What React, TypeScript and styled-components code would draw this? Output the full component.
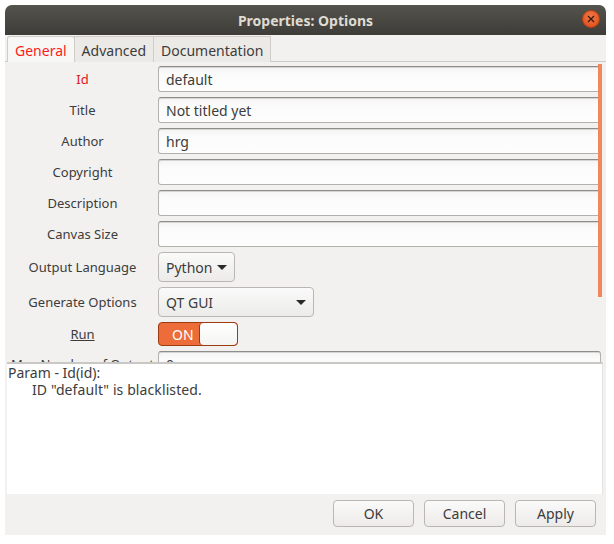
import React from "react";
import styled, { createGlobalStyle } from "styled-components";

const Global = createGlobalStyle`
  html, body { margin: 0; padding: 0; background: #ffffff; }
  body { font-family: "Noto Sans", "DejaVu Sans", sans-serif; }
  * { box-sizing: border-box; }
`;

const Window = styled.div`
  margin: 5px 0 0 5px;
  width: 601px;
  height: 530px;
  display: flex;
  flex-direction: column;
  background: #f2f1f0;
  border-radius: 7px 7px 0 0;
  overflow: hidden;
`;

const TitleBar = styled.div`
  height: 30px;
  flex: none;
  position: relative;
  display: flex;
  align-items: center;
  justify-content: center;
  background: linear-gradient(#55534d, #3d3c38);
  color: #dfdbd2;
  font-weight: 700;
  font-size: 14px;
`;

const CloseBtn = styled.div`
  position: absolute;
  right: 6px;
  top: 5px;
  width: 18px;
  height: 18px;
  border-radius: 50%;
  background: radial-gradient(circle at 50% 35%, #f07a4a, #dd4814);
  border: 1px solid #b7400f;
  display: flex;
  align-items: center;
  justify-content: center;
`;

const Tabs = styled.div`
  flex: none;
  display: flex;
  height: 27px;
  padding: 1px 0 0 2px;
  border-bottom: 1px solid #cdcbc7;
`;

const Tab = styled.div<{ $active?: boolean }>`
  height: 26px;
  padding: 2px 7px 0 7px;
  min-width: ${(p) => (p.$active ? "0" : "auto")};
  display: flex;
  align-items: center;
  font-size: 14px;
  color: ${(p) => (p.$active ? "#ff1a1a" : "#3c3c3c")};
  background: ${(p) => (p.$active ? "#f7f7f6" : "#eceae7")};
  border: 1px solid #d0cdc8;
  border-bottom: none;
  margin-right: -1px;
  border-radius: ${(p) => (p.$active ? "3px 3px 0 0" : "0")};
`;

const ScrollPane = styled.div`
  flex: none;
  height: 300px;
  position: relative;
  overflow: hidden;
  padding: 4px 5px 0 2px;
`;

const Form = styled.div`
  display: grid;
  grid-template-columns: 151px 1fr;
  row-gap: 5px;
  align-items: center;
`;

const Label = styled.div<{ $error?: boolean; $under?: boolean }>`
  text-align: center;
  font-size: 13px;
  color: ${(p) => (p.$error ? "#e0171a" : "#3c3c3c")};
  text-decoration: ${(p) => (p.$under ? "underline" : "none")};
  white-space: nowrap;
`;

const Entry = styled.div`
  height: 26px;
  border: 1px solid #b3b1ad;
  border-top-color: #8f8d89;
  border-radius: 3px;
  background: linear-gradient(#f4f4f4, #fbfbfb 30%, #fdfdfd);
  box-shadow: inset 0 1px 0 #d6d5d2;
  padding: 0 7px;
  display: flex;
  align-items: center;
  font-size: 14px;
  color: #3c3c3c;
`;

const Combo = styled.div<{ $width: number }>`
  width: ${(p) => p.$width}px;
  height: 30px;
  border: 1px solid #bab7b2;
  border-radius: 4px;
  background: linear-gradient(#fafafa, #ecebe9);
  display: flex;
  align-items: center;
  justify-content: space-between;
  padding: 0 7px;
  font-size: 14px;
  color: #3c3c3c;
`;

const Arrow = styled.span`
  width: 0;
  height: 0;
  border-left: 5px solid transparent;
  border-right: 5px solid transparent;
  border-top: 5px solid #2a2a2a;
`;

const Switch = styled.div`
  width: 80px;
  height: 24px;
  border: 1px solid #9c3a12;
  border-radius: 4px;
  background: #ed6d3a;
  display: flex;
  align-items: stretch;
  overflow: hidden;
`;

const SwitchText = styled.div`
  flex: 1;
  display: flex;
  align-items: center;
  padding-left: 13px;
  color: #ffffff;
  font-size: 14px;
`;

const Knob = styled.div`
  width: 38px;
  background: linear-gradient(#ffffff, #f4f4f3);
  border-left: 1px solid #9c3a12;
  border-radius: 4px;
`;

const ScrollThumb = styled.div`
  position: absolute;
  right: 4px;
  top: 2px;
  width: 4px;
  height: 233px;
  background: #f0885c;
`;

const MessagePane = styled.div`
  flex: none;
  height: 132px;
  margin: 0 3px 0 2px;
  background: #ffffff;
  border-top: 2px solid #c9c8c5;
  border-right: 1px solid #e4e3e1;
  font-size: 14px;
  color: #3c3c3c;
  padding: 0 0 0 1px;
  line-height: 17px;
`;

const Indented = styled.div`
  padding-left: 24px;
  letter-spacing: 0.1px;
`;

const ButtonRow = styled.div`
  flex: 1;
  display: flex;
  justify-content: flex-end;
  align-items: flex-start;
  gap: 10px;
  padding: 6px 10px 0 0;
`;

const Button = styled.div`
  width: 81px;
  height: 27px;
  border: 1px solid #bab7b2;
  border-radius: 4px;
  background: linear-gradient(#fafafa, #edebe9);
  display: flex;
  align-items: center;
  justify-content: center;
  font-size: 14px;
  color: #3c3c3c;
`;

const rows: [string, string, boolean?][] = [
  ["Id", "default", true],
  ["Title", "Not titled yet"],
  ["Author", "hrg"],
  ["Copyright", ""],
  ["Description", ""],
  ["Canvas Size", ""],
];

export default function App() {
  return (
    <>
      <Global />
      <Window>
        <TitleBar>
          Properties: Options
          <CloseBtn>
            <svg width="8" height="8" viewBox="0 0 8 8">
              <path d="M1 1L7 7M7 1L1 7" stroke="#3a1a0a" strokeWidth="1.4" />
            </svg>
          </CloseBtn>
        </TitleBar>
        <Tabs>
          <Tab $active>General</Tab>
          <Tab>Advanced</Tab>
          <Tab>Documentation</Tab>
        </Tabs>
        <ScrollPane>
          <Form>
            {rows.map(([l, v, err]) => (
              <React.Fragment key={l}>
                <Label $error={err}>{l}</Label>
                <Entry>{v}</Entry>
              </React.Fragment>
            ))}
            <Label>Output Language</Label>
            <Combo $width={77}>
              Python <Arrow />
            </Combo>
            <Label>Generate Options</Label>
            <Combo $width={156}>
              QT GUI <Arrow />
            </Combo>
            <Label $under>Run</Label>
            <Switch>
              <SwitchText>ON</SwitchText>
              <Knob />
            </Switch>
            <Label>Max Number of Output</Label>
            <Entry>0</Entry>
          </Form>
          <ScrollThumb />
        </ScrollPane>
        <MessagePane>
          <div>Param - Id(id):</div>
          <Indented>ID "default" is blacklisted.</Indented>
        </MessagePane>
        <ButtonRow>
          <Button>OK</Button>
          <Button>Cancel</Button>
          <Button>Apply</Button>
        </ButtonRow>
      </Window>
    </>
  );
}
